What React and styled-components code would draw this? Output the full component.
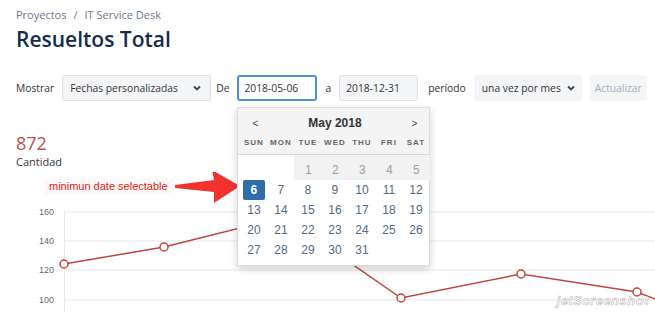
import React from 'react'
import styled, { createGlobalStyle } from 'styled-components'

const GlobalStyle = createGlobalStyle`
  html, body {
    margin: 0;
    padding: 0;
    background: #fff;
    overflow: hidden;
  }
  body {
    font-family: "Open Sans", "Noto Sans", sans-serif;
    color: #172b4d;
  }
`

const Page = styled.div`
  width: 655px;
  height: 312px;
  padding-top: 7px;
  box-sizing: border-box;
  overflow: hidden;
`

const Header = styled.div`
  padding: 0 16px;
`

const Breadcrumb = styled.div`
  font-size: 11px;
  line-height: 16px;
  color: #6b778c;
  display: flex;
  gap: 7px;
`

const Title = styled.h1`
  margin: 2px 0 0;
  font-size: 21px;
  line-height: 28px;
  font-weight: 600;
  color: #172b4d;
`

const Toolbar = styled.div`
  margin-top: 22px;
  padding: 0 16px;
  display: flex;
  align-items: center;
  height: 26px;
  font-size: 10.3px;
  color: #333;
  white-space: nowrap;
  & > * {
    flex-shrink: 0;
  }
`

const Label = styled.span`
  margin: 0 ${({ $r }) => $r}px 0 ${({ $l }) => $l}px;
`

const Select = styled.div`
  width: ${({ $w }) => $w}px;
  height: 26px;
  box-sizing: border-box;
  display: flex;
  align-items: center;
  justify-content: space-between;
  padding: 0 ${({ $pr }) => $pr}px 0 7px;
  background: #f4f5f7;
  border: 1px solid ${({ $border }) => ($border ? '#dfe1e6' : '#f4f5f7')};
  border-radius: 3px;
  color: #333;
`

const InputWrap = styled.div`
  position: relative;
`

const DateInput = styled.div`
  width: ${({ $w }) => $w}px;
  height: 26px;
  box-sizing: border-box;
  display: flex;
  align-items: center;
  padding-left: ${({ $focus }) => ($focus ? 5 : 6)}px;
  border-radius: 3px;
  background: ${({ $focus }) => ($focus ? '#fff' : '#f4f5f7')};
  border: ${({ $focus }) => ($focus ? '2px solid #4c8fd6' : '1px solid #dfe1e6')};
  color: #333;
`

const Button = styled.div`
  width: 57px;
  height: 26px;
  display: flex;
  align-items: center;
  justify-content: center;
  background: #f4f5f7;
  border-radius: 3px;
  color: #a5adba;
`

const Calendar = styled.div`
  position: absolute;
  top: 32px;
  left: 0;
  width: 193px;
  background: #fff;
  border: 1px solid #dcdcdc;
  box-sizing: border-box;
  box-shadow: 0 3px 8px rgba(0, 0, 0, 0.18);
  font-family: "Liberation Sans", Arial, sans-serif;
  white-space: normal;
  z-index: 5;
`

const CalHead = styled.div`
  background: #f4f4f4;
  border-bottom: 1px solid #d8d8d8;
  padding: 8px 0 4px 2px;
`

const MonthRow = styled.div`
  display: flex;
  align-items: center;
  justify-content: space-between;
  padding: 0 12px;
  height: 14px;
  font-size: 12px;
`

const Nav = styled.span`
  font-size: 10px;
  color: #444;
`

const Month = styled.span`
  font-weight: bold;
  color: #333;
`

const DayNames = styled.div`
  display: grid;
  grid-template-columns: repeat(7, 27px);
  margin-top: 6px;
  font-size: 8px;
  font-weight: bold;
  letter-spacing: 1px;
  color: #666;
  text-align: center;
  line-height: 14px;
`

const Days = styled.div`
  display: grid;
  grid-template-columns: repeat(7, 27px);
  grid-template-rows: 25px repeat(4, 20px);
  padding: 0 0 5px 2px;
`

const Day = styled.div`
  display: flex;
  justify-content: center;
  font-size: 12px;
  color: ${({ $off }) => ($off ? '#a0a0a0' : '#4f6a86')};
  background: ${({ $off }) => ($off ? '#f2f2f2' : 'transparent')};
  padding-bottom: ${({ $first }) => ($first ? '3px' : '0')};
  align-items: ${({ $first }) => ($first ? 'flex-end' : 'center')};
  ${({ $off }) => $off && 'margin-right: -1px;'}
`

const Selected = styled.span`
  width: 22px;
  height: 20px;
  border-radius: 2px;
  background: #2f6ea8;
  color: #fff;
  font-weight: bold;
  display: flex;
  align-items: center;
  justify-content: center;
`

const Stats = styled.div`
  margin-top: 31px;
  padding: 0 16px;
`

const Total = styled.div`
  font-size: 18px;
  line-height: 22px;
  color: #c0504d;
`

const Caption = styled.div`
  margin-top: 1px;
  font-size: 11px;
  line-height: 14px;
  color: #333;
`

const ChartArea = styled.div`
  position: relative;
  margin-top: 3px;
  height: 140px;
`

const Note = styled.div`
  position: absolute;
  left: 44px;
  top: 6px;
  padding: 1px 5px;
  background: #fff8f6;
  color: #d22;
  font-family: "Liberation Sans", Arial, sans-serif;
  font-size: 11px;
  line-height: 14px;
`

const Watermark = styled.div`
  position: absolute;
  right: 6px;
  bottom: 4px;
  font-family: "Liberation Sans", Arial, sans-serif;
  font-style: italic;
  font-weight: bold;
  font-size: 13px;
  color: #fff;
  -webkit-text-stroke: 0.6px rgba(170, 170, 170, 0.8);
  letter-spacing: 0.5px;
`

const Chevron = () => (
  <svg width="8" height="6" viewBox="0 0 8 6">
    <path d="M1 1.5 L4 4.5 L7 1.5" fill="none" stroke="#444" strokeWidth="1.8" />
  </svg>
)

const TOP = 172
const points = [
  [64, 264], [164, 247], [284, 217], [401, 298], [521, 274], [637, 292],
]

const Chart = () => (
  <svg width="655" height="140" viewBox={`0 ${TOP} 655 140`} style={{ display: 'block' }}>
    {[[212, '160'], [241, '140'], [270, '120'], [300, '100']].map(([y, t]) => (
      <g key={t}>
        <line x1="64" x2="655" y1={y} y2={y} stroke="#e8e8e8" strokeWidth="1" />
        <text x="54" y={y + 3} fontSize="9" fill="#666" textAnchor="end" fontFamily="Liberation Sans, Arial, sans-serif">{t}</text>
      </g>
    ))}
    <line x1="64.5" x2="64.5" y1="212" y2="312" stroke="#e8e8e8" />
    <polyline
      points={[...points, [660, 301]].map(p => p.join(',')).join(' ')}
      fill="none"
      stroke="#c0463d"
      strokeWidth="1.5"
    />
    {points.map(([x, y]) => (
      <circle key={x} cx={x} cy={y} r="4" fill="#fff" stroke="#c0463d" strokeWidth="1.5" />
    ))}
    <polygon
      points="175,185 214,180 212,170 240,186 214,203 214,192 175,188"
      fill="#f0332e"
    />
  </svg>
)

const weeks = [
  [null, null, 1, 2, 3, 4, 5],
  [6, 7, 8, 9, 10, 11, 12],
  [13, 14, 15, 16, 17, 18, 19],
  [20, 21, 22, 23, 24, 25, 26],
  [27, 28, 29, 30, 31, null, null],
]

const App = () => {
  return (
    <Page>
      <GlobalStyle />
      <Header>
        <Breadcrumb>
          <span>Proyectos</span>
          <span>/</span>
          <span>IT Service Desk</span>
        </Breadcrumb>
        <Title>Resueltos Total</Title>
      </Header>

      <Toolbar>
        <Label $l={0} $r={8}>Mostrar</Label>
        <Select $w={149} $pr={9} $border>
          <span>Fechas personalizadas</span>
          <Chevron />
        </Select>
        <Label $l={5} $r={8}>De</Label>
        <InputWrap>
          <DateInput $w={80} $focus>2018-05-06</DateInput>
          <Calendar>
            <CalHead>
              <MonthRow>
                <Nav>&lt;</Nav>
                <Month>May 2018</Month>
                <Nav>&gt;</Nav>
              </MonthRow>
              <DayNames>
                {['SUN', 'MON', 'TUE', 'WED', 'THU', 'FRI', 'SAT'].map(d => <span key={d}>{d}</span>)}
              </DayNames>
            </CalHead>
            <Days>
              {weeks.map((week, wi) =>
                week.map((d, di) => (
                  <Day key={`${wi}-${di}`} $first={wi === 0} $off={wi === 0 && d !== null}>
                    {d === 6 ? <Selected>6</Selected> : d}
                  </Day>
                ))
              )}
            </Days>
          </Calendar>
        </InputWrap>
        <Label $l={8} $r={8}>a</Label>
        <DateInput $w={79}>2018-12-31</DateInput>
        <Label $l={10} $r={8}>período</Label>
        <Select $w={108} $pr={6}>
          <span>una vez por mes</span>
          <Chevron />
        </Select>
        <Label $l={0} $r={8} />
        <Button>Actualizar</Button>
      </Toolbar>

      <Stats>
        <Total>872</Total>
        <Caption>Cantidad</Caption>
      </Stats>

      <ChartArea>
        <Chart />
        <Note>minimun date selectable</Note>
        <Watermark>jetScreenshot</Watermark>
      </ChartArea>
    </Page>
  )
}

export default App
